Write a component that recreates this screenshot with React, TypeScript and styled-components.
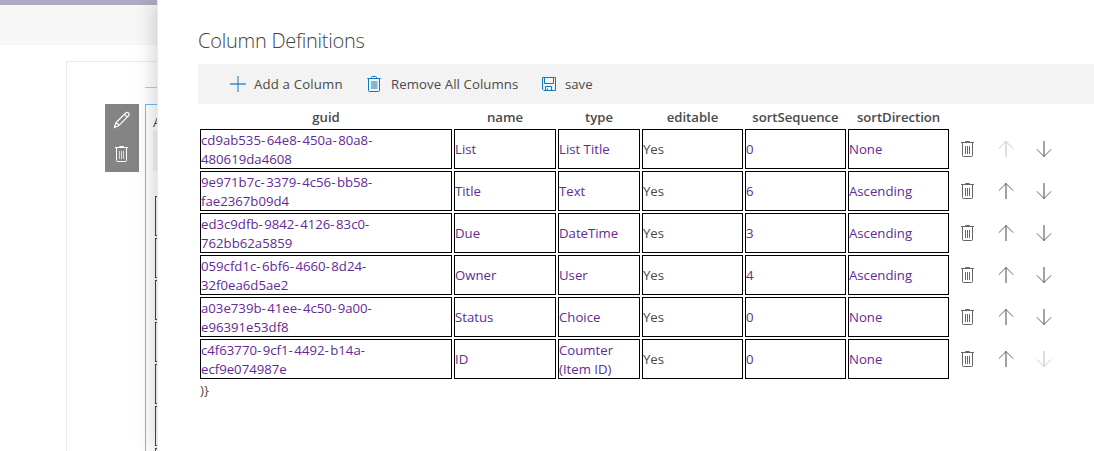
import React from 'react';
import styled, { createGlobalStyle } from 'styled-components';

const GlobalStyle = createGlobalStyle`
  * { box-sizing: border-box; }
  body {
    margin: 0;
    overflow: hidden;
    background: #fff;
    font-family: 'Open Sans', 'Noto Sans', sans-serif;
    font-size: 13.2px;
    line-height: 19px;
    color: #4a4a4a;
  }
`;

const Screen = styled.div`
  display: flex;
  width: 1094px;
  height: 451px;
  overflow: hidden;
`;

const Backdrop = styled.div`
  flex: none;
  width: 157px;
  height: 451px;
`;

const SuiteBar = styled.div`
  height: 5px;
  background: #ababc3;
`;

const CommandStrip = styled.div`
  height: 40px;
  background: #f7f7f7;
`;

const Canvas = styled.div`
  display: flex;
  height: 390px;
  margin: 16px 0 0 66px;
  border: solid #eaeaea;
  border-width: 1px 0 0 1px;
`;

const EditTools = styled.div`
  display: flex;
  flex-direction: column;
  align-items: center;
  flex: none;
  width: 34px;
  height: 68px;
  margin: 42px 6px 0 38px;
  background: #848484;
  color: #fff;
`;

const ToolSlot = styled.div`
  display: flex;
  align-items: center;
  justify-content: center;
  height: 34px;
  padding-bottom: 2px;
`;

const WebPartColumn = styled.div`
  flex: 1;
  min-width: 0;
  padding-top: 25px;
`;

const Divider = styled.div`
  height: 1px;
  margin-bottom: 16px;
  background: #c8c8c8;
`;

const WebPart = styled.div`
  height: 348px;
  padding-left: 7px;
  border: solid #71bcee;
  border-width: 1px 0 0 1px;
  overflow: hidden;
`;

const WebPartLabel = styled.div`
  height: 26px;
  padding-top: 8px;
`;

const WebPartBar = styled.div`
  height: 40px;
  margin-bottom: 25px;
  background: #f3f3f3;
`;

const HiddenCell = styled.div`
  height: 40px;
  margin: 0 0 2px 2px;
  border: 1px solid #444;
  border-right: 0;
`;

const Panel = styled.main`
  position: relative;
  flex: 1;
  height: 451px;
  padding: 26px 0 0 40px;
  border-left: 1px solid #eaeaea;
  background: #fff;
  box-shadow: 0 0 22px rgba(0, 0, 0, 0.22);
`;

const Title = styled.h1`
  height: 38px;
  margin: 0;
  font-size: 20px;
  font-weight: 300;
  line-height: 29px;
  letter-spacing: -0.25px;
  color: #444;
`;

const CommandBar = styled.div`
  display: flex;
  align-items: center;
  height: 40px;
  padding-left: 31px;
  background: #f3f3f3;
`;

const Command = styled.button<{ $width: number; $spacing: number; $gap?: number }>`
  display: flex;
  align-items: center;
  gap: ${(p) => p.$gap ?? 7}px;
  flex: none;
  width: ${(p) => p.$width}px;
  height: 40px;
  padding: 0;
  border: 0;
  background: none;
  font: inherit;
  letter-spacing: ${(p) => p.$spacing}px;
  white-space: nowrap;
  color: #4a4a4a;

  svg { color: #0f78bf; flex: none; }
`;

const Grid = styled.div`
  padding: 4px 0 0 2px;
`;

const Row = styled.div<{ $head?: boolean }>`
  display: grid;
  grid-template-columns: 252px 102px 82px 101px 101px 101px 36px 36px 36px;
  grid-template-rows: 100%;
  column-gap: 2px;
  height: ${(p) => (p.$head ? 19 : 40)}px;
  margin-bottom: 2px;
`;

const HeadCell = styled.div`
  text-align: center;
  font-weight: 600;
  letter-spacing: -0.05px;
`;

const Cell = styled.div<{ $link?: boolean; $wrapped?: boolean }>`
  display: flex;
  align-items: center;
  height: 40px;
  padding-top: ${(p) => (p.$wrapped ? 2 : 0)}px;
  border: 1px solid #000;
  color: ${(p) => (p.$link ? '#622a98' : '#4a4a4a')};
`;

const CellText = styled.span<{ $width: number }>`
  width: ${(p) => p.$width}px;
`;

const Hyphen = styled.span`
  letter-spacing: 1.5px;
`;

const IconButton = styled.button<{ $faded?: boolean }>`
  display: flex;
  align-items: center;
  justify-content: center;
  width: 34px;
  height: 40px;
  padding: 0;
  border: 0;
  background: none;
  color: ${(p) => (p.$faded ? '#c8c8c8' : '#666')};
`;

const Trailing = styled.div`
  padding-left: 2px;
`;

const Trash = ({ slats = 'currentColor' }: { slats?: string }) => (
  <svg width="16" height="16" viewBox="0 0 16 16" fill="none" stroke="currentColor">
    <path d="M1 1.500h13M5.500 1.500V.5h4v1M2.500 2v12.500q0 1 1 1h8q1 0 1-1V2" />
    <path d="M5.500 5v8M7.500 5v8M9.500 5v8" stroke={slats} />
  </svg>
);

const FilledTrash = () => (
  <svg width="16" height="16" viewBox="0 0 16 16" fill="none" stroke="currentColor">
    <path d="M1.300 2.500h13.400M5.500 2.500v-1q0-1 1-1h3q1 0 1 1v1M2.500 3v11.500q0 1 1 1h9q1 0 1-1V3" />
    <path d="M5 5h6.500v8H5z" fill="currentColor" fillOpacity="0.5" stroke="none" />
  </svg>
);

const Plus = () => (
  <svg width="18" height="16" viewBox="0 0 18 16" fill="none" stroke="currentColor">
    <path d="M1 8h16" strokeWidth="2" strokeOpacity=".6" />
    <path d="M9 0v16" strokeWidth="2" strokeOpacity=".5" />
  </svg>
);

const Save = () => (
  <svg width="16" height="16" viewBox="0 0 16 16" fill="none" stroke="currentColor">
    <path d="M1.500 1.500h13v13H3L1.500 13z" />
    <path d="M3.500 1.500v6h9v-6M4.500 14.500v-4h6v4M6.500 14.500v-2" />
  </svg>
);

const Arrow = ({ down }: { down?: boolean }) => (
  <svg width="16" height="16" viewBox="0 0 16 16" fill="none" stroke="currentColor">
    <path d="M8 0v16" strokeWidth="2" strokeOpacity=".6" />
    <path d={down ? 'M.8 8.300 8 15.500l7.200-7.200' : 'M.8 7.700 8 .5l7.200 7.200'} />
  </svg>
);

const Pencil = () => (
  <svg width="18" height="18" viewBox="0 0 18 18" fill="none" stroke="currentColor" strokeWidth="1.200">
    <path d="M1.500 16.500l1.300-4.700L12.700 2q1.500-1.300 2.700 0 1.400 1.300.2 2.700l-9.800 9.900zM2.800 11.800q2.600.4 3 2.800M11.400 3.300l2.900 2.900" />
  </svg>
);

const headings = ['guid', 'name', 'type', 'editable', 'sortSequence', 'sortDirection'];

const records = [
  ['cd9ab535-64e8-450a-80a8-480619da4608', 'List', 'List Title', 'Yes', '0', 'None'],
  ['9e971b7c-3379-4c56-bb58-fae2367b09d4', 'Title', 'Text', 'Yes', '6', 'Ascending'],
  ['ed3c9dfb-9842-4126-83c0-762bb62a5859', 'Due', 'DateTime', 'Yes', '3', 'Ascending'],
  ['059cfd1c-6bf6-4660-8d24-32f0ea6d5ae2', 'Owner', 'User', 'Yes', '4', 'Ascending'],
  ['a03e739b-41ee-4c50-9a00-e96391e53df8', 'Status', 'Choice', 'Yes', '0', 'None'],
  ['c4f63770-9cf1-4492-b14a-ecf9e074987e', 'ID', 'Coumter (Item ID)', 'Yes', '0', 'None'],
];

const textWidths = [180, 98, 70, 98, 98, 98];

const Guid = ({ value }: { value: string }) => (
  <>
    {value.split('-').map((part, i) => (
      <React.Fragment key={i}>
        {i > 0 && <Hyphen>-</Hyphen>}
        {part}
      </React.Fragment>
    ))}
  </>
);

export default function App() {
  return (
    <Screen>
      <GlobalStyle />
      <Backdrop>
        <SuiteBar />
        <CommandStrip />
        <Canvas>
          <EditTools>
            <ToolSlot><Pencil /></ToolSlot>
            <ToolSlot><Trash slats="#f3c4f6" /></ToolSlot>
          </EditTools>
          <WebPartColumn>
            <Divider />
            <WebPart>
              <WebPartLabel>A</WebPartLabel>
              <WebPartBar />
              {[0, 1, 2, 3, 4, 5, 6].map((i) => <HiddenCell key={i} />)}
            </WebPart>
          </WebPartColumn>
        </Canvas>
      </Backdrop>
      <Panel>
        <Title>Column Definitions</Title>
        <CommandBar>
          <Command $width={137} $spacing={0.17}><Plus />Add a Column</Command>
          <Command $width={175} $spacing={0.09} $gap={9}><FilledTrash />Remove All Columns</Command>
          <Command $width={60} $spacing={0} $gap={8}><Save />save</Command>
        </CommandBar>
        <Grid>
          <Row $head>
            {headings.map((h) => <HeadCell key={h}>{h}</HeadCell>)}
          </Row>
          {records.map((record, r) => (
            <Row key={record[0]}>
              {record.map((value, c) => (
                <Cell key={c} $link={c !== 3} $wrapped={value.length > 12}>
                  <CellText $width={textWidths[c]}>
                    {c === 0 ? <Guid value={value} /> : value}
                  </CellText>
                </Cell>
              ))}
              <IconButton><Trash /></IconButton>
              <IconButton $faded={r === 0}><Arrow /></IconButton>
              <IconButton $faded={r === records.length - 1}><Arrow down /></IconButton>
            </Row>
          ))}
        </Grid>
        <Trailing>{')}'}</Trailing>
      </Panel>
    </Screen>
  );
}
